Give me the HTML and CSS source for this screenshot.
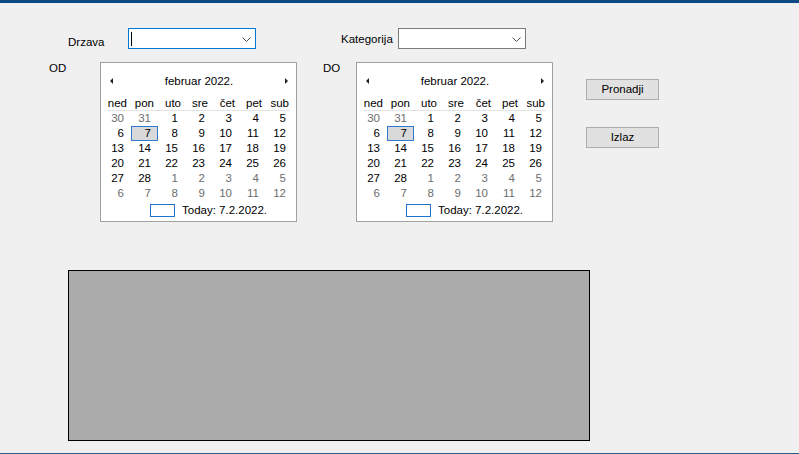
FILE: index.html
```html
<!DOCTYPE html>
<html>
<head>
<meta charset="utf-8">
<link rel="stylesheet" href="styles.css">
</head>
<body>
<div class="window">
  <div class="row1">
    <span class="lbl lbl-drzava">Drzava</span>
    <div class="combo focus"><span class="caret"></span><svg class="chev" width="9" height="5" viewBox="0 0 9 5"><path d="M0.5 0.5 L4.5 4.5 L8.5 0.5" fill="none" stroke="#505050" stroke-width="1"/></svg></div>
    <span class="lbl lbl-kat">Kategorija</span>
    <div class="combo"><svg class="chev" width="9" height="5" viewBox="0 0 9 5"><path d="M0.5 0.5 L4.5 4.5 L8.5 0.5" fill="none" stroke="#505050" stroke-width="1"/></svg></div>
  </div>
  <div class="row2">
    <span class="lbl lbl-od">OD</span>
    <div class="cal">
      <div class="cal-head"><span class="arr arr-l"></span><span class="title">februar 2022.</span><span class="arr arr-r"></span></div>
      <div class="dnames"><span>ned</span><span>pon</span><span>uto</span><span>sre</span><span>čet</span><span>pet</span><span>sub</span></div>
      <div class="uline"></div>
      <div class="days">
        <span class="g">30</span><span class="g">31</span><span>1</span><span>2</span><span>3</span><span>4</span><span>5</span>
        <span>6</span><span class="sel">7</span><span>8</span><span>9</span><span>10</span><span>11</span><span>12</span>
        <span>13</span><span>14</span><span>15</span><span>16</span><span>17</span><span>18</span><span>19</span>
        <span>20</span><span>21</span><span>22</span><span>23</span><span>24</span><span>25</span><span>26</span>
        <span>27</span><span>28</span><span class="g">1</span><span class="g">2</span><span class="g">3</span><span class="g">4</span><span class="g">5</span>
        <span class="g">6</span><span class="g">7</span><span class="g">8</span><span class="g">9</span><span class="g">10</span><span class="g">11</span><span class="g">12</span>
      </div>
      <div class="today"><span class="tbox"></span><span>Today: 7.2.2022.</span></div>
    </div>
    <span class="lbl lbl-do">DO</span>
    <div class="cal">
      <div class="cal-head"><span class="arr arr-l"></span><span class="title">februar 2022.</span><span class="arr arr-r"></span></div>
      <div class="dnames"><span>ned</span><span>pon</span><span>uto</span><span>sre</span><span>čet</span><span>pet</span><span>sub</span></div>
      <div class="uline"></div>
      <div class="days">
        <span class="g">30</span><span class="g">31</span><span>1</span><span>2</span><span>3</span><span>4</span><span>5</span>
        <span>6</span><span class="sel">7</span><span>8</span><span>9</span><span>10</span><span>11</span><span>12</span>
        <span>13</span><span>14</span><span>15</span><span>16</span><span>17</span><span>18</span><span>19</span>
        <span>20</span><span>21</span><span>22</span><span>23</span><span>24</span><span>25</span><span>26</span>
        <span>27</span><span>28</span><span class="g">1</span><span class="g">2</span><span class="g">3</span><span class="g">4</span><span class="g">5</span>
        <span class="g">6</span><span class="g">7</span><span class="g">8</span><span class="g">9</span><span class="g">10</span><span class="g">11</span><span class="g">12</span>
      </div>
      <div class="today"><span class="tbox"></span><span>Today: 7.2.2022.</span></div>
    </div>
    <div class="buttons">
      <div class="btn">Pronadji</div>
      <div class="btn">Izlaz</div>
    </div>
  </div>
  <div class="panel"></div>
</div>
</body>
</html>
```
FILE: styles.css
```css
* { box-sizing: border-box; }
html, body { margin: 0; padding: 0; }
body {
  background: #f0f0f0;
  font-family: "Liberation Sans", Arial, sans-serif;
  font-size: 11.5px;
  color: #000;
}
.window {
  width: 799px;
  height: 454px;
  border-top: 3px solid #0b4a84;
  border-bottom: 1px solid #2a5b8b;
  overflow: hidden;
}
.row1 {
  display: flex;
  align-items: flex-start;
  padding-top: 25px;
  padding-left: 68px;
  height: 46px;
}
.lbl { line-height: 15px; white-space: nowrap; }
.lbl-drzava { width: 60px; margin-top: 7px; }
.lbl-kat { width: 57px; margin-left: 85px; margin-top: 4px; }
.combo {
  width: 128px;
  height: 21px;
  background: #fff;
  border: 1px solid #7a7a7a;
  display: flex;
  align-items: center;
  justify-content: flex-end;
  padding-right: 4px;
  position: relative;
}
.combo.focus { border-color: #0078d7; justify-content: space-between; padding-left: 2px; }
.caret { width: 1px; height: 14px; background: #000; }
.chev { display: block; margin-top: 1px; }
.row2 {
  display: flex;
  align-items: flex-start;
  margin-top: 13px;
  padding-left: 49px;
  height: 160px;
}
.lbl-od { width: 51px; margin-top: -1px; }
.lbl-do { width: 33px; margin-left: 26px; margin-top: -1px; }
.cal {
  width: 197px;
  height: 160px;
  background: #fff;
  border: 1px solid #a0a0a0;
  display: flex;
  flex-direction: column;
}
.cal-head {
  height: 33px;
  display: flex;
  align-items: flex-start;
  padding: 11px 8px 0 9px;
  line-height: 15px;
}
.title { flex: 1; text-align: center; }
.arr { width: 0; height: 0; margin-top: 4px; border-top: 3.5px solid transparent; border-bottom: 3.5px solid transparent; }
.arr-l { border-right: 3px solid #222; }
.arr-r { border-left: 3px solid #222; }
.dnames {
  display: grid;
  grid-template-columns: repeat(7, 27px);
  margin-left: 3px;
  line-height: 15px;
  height: 14px;
}
.dnames span { text-align: right; padding-right: 4px; }
.uline { height: 1px; background: #e3e3e3; margin: 0 6px 0 6px; }
.days {
  display: grid;
  grid-template-columns: repeat(7, 27px);
  grid-auto-rows: 15px;
  margin-left: 3px;
  line-height: 15px;
}
.days span { text-align: right; padding-right: 7px; }
.days span.g { color: #6d6d6d; }
.days span.sel { background: #d9d9d9; border: 1px solid #2f7ad0; line-height: 13px; padding-right: 6px; }
.today {
  display: flex;
  align-items: center;
  padding-left: 49px;
  margin-top: 2px;
  line-height: 15px;
  gap: 7px;
}
.tbox { width: 25px; height: 13px; border: 1px solid #1f73cf; }
.buttons {
  margin-left: 33px;
  padding-top: 17px;
  display: flex;
  flex-direction: column;
  gap: 27px;
}
.btn {
  width: 73px;
  height: 21px;
  background: #e1e1e1;
  border: 1px solid #adadad;
  text-align: center;
  line-height: 19px;
}
.panel {
  margin-top: 48px;
  margin-left: 68px;
  width: 522px;
  height: 171px;
  background: #ababab;
  border: 1px solid #000;
}
```
